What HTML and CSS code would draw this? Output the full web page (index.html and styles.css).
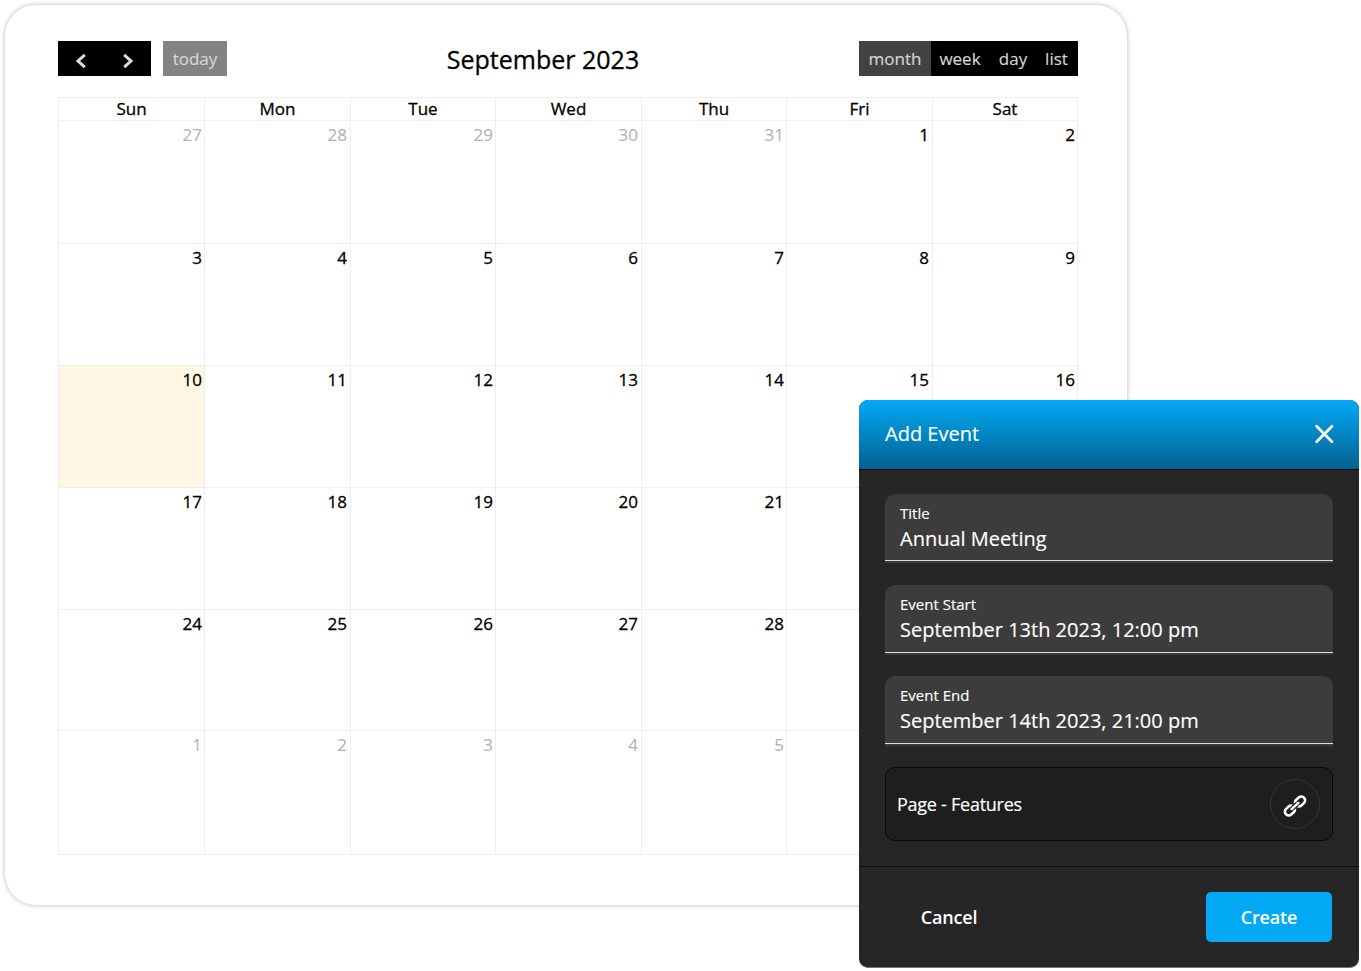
FILE: index.html
```html
<!DOCTYPE html>
<html lang="en">
<head>
<meta charset="utf-8">
<title>Calendar</title>
<link rel="stylesheet" href="styles.css">
</head>
<body>
<main class="card">
  <header class="toolbar">
    <div class="toolbar-left">
      <div class="group nav">
        <button class="btn" aria-label="Previous"><svg width="12" height="16" viewBox="0 0 12 16"><path d="M9.8 1.8 3 8l6.8 6.2"/></svg></button>
        <button class="btn" aria-label="Next"><svg width="12" height="16" viewBox="0 0 12 16"><path d="M2.2 1.8 9 8l-6.8 6.2"/></svg></button>
      </div>
      <button class="btn today-btn">today</button>
    </div>
    <h1 class="title">September 2023</h1>
    <div class="group views">
      <button class="btn month active">month</button><button class="btn week">week</button><button class="btn day-view">day</button><button class="btn list">list</button>
    </div>
  </header>
  <section class="grid">
    <div class="head">Sun</div><div class="head">Mon</div><div class="head">Tue</div><div class="head">Wed</div><div class="head">Thu</div><div class="head">Fri</div><div class="head">Sat</div>
    <div class="cell other">27</div><div class="cell other">28</div><div class="cell other">29</div><div class="cell other">30</div><div class="cell other">31</div><div class="cell">1</div><div class="cell">2</div>
    <div class="cell">3</div><div class="cell">4</div><div class="cell">5</div><div class="cell">6</div><div class="cell">7</div><div class="cell">8</div><div class="cell">9</div>
    <div class="cell current">10</div><div class="cell">11</div><div class="cell">12</div><div class="cell">13</div><div class="cell">14</div><div class="cell">15</div><div class="cell">16</div>
    <div class="cell">17</div><div class="cell">18</div><div class="cell">19</div><div class="cell">20</div><div class="cell">21</div><div class="cell"></div><div class="cell"></div>
    <div class="cell">24</div><div class="cell">25</div><div class="cell">26</div><div class="cell">27</div><div class="cell">28</div><div class="cell"></div><div class="cell"></div>
    <div class="cell other">1</div><div class="cell other">2</div><div class="cell other">3</div><div class="cell other">4</div><div class="cell other">5</div><div class="cell"></div><div class="cell"></div>
  </section>
</main>
<section class="modal" role="dialog" aria-label="Add Event">
  <header class="modal-head">
    <h2 class="modal-title">Add Event</h2>
    <svg class="close" width="20" height="20" viewBox="0 0 20 20"><path d="M2.6 2.3 18 17.7M18 2.3 2.6 17.7"/></svg>
  </header>
  <div class="modal-body">
    <div class="field"><div class="label">Title</div><div class="value">Annual Meeting</div></div>
    <div class="field"><div class="label">Event Start</div><div class="value">September 13th 2023, 12:00 pm</div></div>
    <div class="field"><div class="label">Event End</div><div class="value">September 14th 2023, 21:00 pm</div></div>
    <div class="page-link">
      <span>Page - Features</span>
      <span class="round"><svg width="24" height="24" viewBox="0 0 24 24"><g transform="rotate(-42 12 12)"><rect x="-0.3" y="8.2" width="11" height="7.6" rx="3.8"/><rect x="13.3" y="8.2" width="11" height="7.6" rx="3.8"/><path class="gap" d="M8.8 12h6.4"/><path class="bar" d="M7.4 12h9.2"/></g></svg></span>
    </div>
  </div>
  <footer class="modal-foot">
    <button class="action cancel">Cancel</button>
    <button class="action create">Create</button>
  </footer>
</section>
</body>
</html>
```

FILE: styles.css
```css
* { box-sizing: border-box; }
body {
  margin: 0;
  width: 1361px;
  height: 971px;
  padding: 5px;
  overflow: hidden;
  position: relative;
  background: #fff;
  font-family: "Open Sans", "Noto Sans", sans-serif;
  color: #000;
}
button { border: 0; margin: 0; padding: 0; font: inherit; background: none; }
.card {
  width: 1122px;
  height: 900px;
  padding: 36px 49px 0 53px;
  border-radius: 31px;
  background: #fff;
  box-shadow: 0 0 5px rgba(0, 0, 0, .3);
  -webkit-text-stroke-width: .3px;
}
.toolbar {
  display: flex;
  justify-content: space-between;
  align-items: flex-start;
  height: 36px;
}
.toolbar-left { display: flex; gap: 12px; }
.group { display: flex; background: #000; }
.btn {
  display: flex;
  align-items: center;
  justify-content: center;
  height: 35px;
  font-size: 17px;
  line-height: 35px;
  color: #d6d6d6;
  -webkit-text-stroke-width: .15px;
}
.nav .btn { width: 46.5px; }
.nav svg { margin-top: 4px; }
.nav path { fill: none; stroke: #ddd; stroke-width: 3; }
.today-btn { width: 64px; background: #838383; }
.month { width: 72px; }
.week { width: 58px; }
.day-view { width: 48px; }
.list { width: 41px; padding-right: 2px; }
.active { background: #424242; }
.title { margin: 0; font-size: 25px; font-weight: 400; line-height: 36px; }
.grid {
  display: grid;
  grid-template-columns: 146px 146px 145px 146px 145px 146px 145px;
  grid-template-rows: 23px 123px 122px 122px 122px 121px 124px;
  width: 1020px;
  margin-top: 20px;
  border-top: 1px solid #eee;
  border-left: 1px solid #eee;
}
.head, .cell { border-right: 1px solid #eee; border-bottom: 1px solid #eee; }
.head { text-align: center; font-size: 17px; line-height: 22px; }
.cell { padding: 2px 2px 0 0; text-align: right; font-size: 17px; line-height: 23px; }
.cell:nth-child(7n+2), .cell:nth-child(7n+4), .cell:nth-child(7n+6) { padding-right: 3px; }
.other { color: #b3b3b3; -webkit-text-stroke-width: .1px; }
.current { background: #fdf7e3; }
.modal {
  position: absolute;
  left: 859px;
  top: 400px;
  width: 500px;
  height: 568px;
  border-radius: 9px;
  overflow: hidden;
  background: #262626;
  border-bottom: 1px solid #77756e;
  color: #fff;
}
.modal-head {
  display: flex;
  align-items: center;
  justify-content: space-between;
  height: 70px;
  padding: 0 25px 2px 26px;
  border-bottom: 1px solid #000;
  background: linear-gradient(#03a9f4, #026291);
}
.modal-title { margin: 0; font-size: 20px; font-weight: 400; -webkit-text-stroke-width: .15px; }
.close path { fill: none; stroke: #fff; stroke-width: 2.8; stroke-linecap: round; }
.modal-body {
  display: flex;
  flex-direction: column;
  height: 397px;
  padding: 24px 26px 0;
  border-bottom: 1px solid #0c0c0c;
}
.field {
  height: 70px;
  margin-bottom: 21px;
  padding: 9px 15px 0;
  border-radius: 10px 10px 0 0;
  background: linear-gradient(#dcdcdc, #dcdcdc) left bottom 2px / 100% 1px no-repeat #3c3c3c;
}
.field:first-child { height: 69px; margin-bottom: 22px; }
.label { font-size: 15px; line-height: 21px; }
.value { font-size: 20px; line-height: 29px; }
.label, .value, .page-link { -webkit-text-stroke-width: .15px; }
.page-link {
  display: flex;
  align-items: center;
  justify-content: space-between;
  height: 74px;
  padding: 0 12px 0 11px;
  border: 1px solid #080808;
  border-radius: 10px;
  background: #1e1e1e;
  font-size: 18px;
  letter-spacing: -.26px;
}
.round {
  display: flex;
  align-items: center;
  justify-content: center;
  width: 50px;
  height: 50px;
  border: 1px solid #363636;
  border-radius: 50%;
}
.round svg { margin-top: 3px; overflow: visible; }
.round rect, .round path { fill: none; stroke: #fff; stroke-width: 2.6; stroke-linecap: round; }
.round .gap { stroke: #1e1e1e; stroke-width: 4.8; stroke-linecap: butt; }
.round .bar { stroke-width: 2.4; }
.modal-foot {
  display: flex;
  align-items: center;
  justify-content: space-between;
  height: 100px;
  padding: 0 27px 0 26px;
}
.action { height: 50px; border-radius: 5px; font-size: 18px; font-weight: 600; letter-spacing: -.15px; color: #fff; }
.cancel { width: 128px; }
.create { width: 126px; background: #03a9f4; }
```
